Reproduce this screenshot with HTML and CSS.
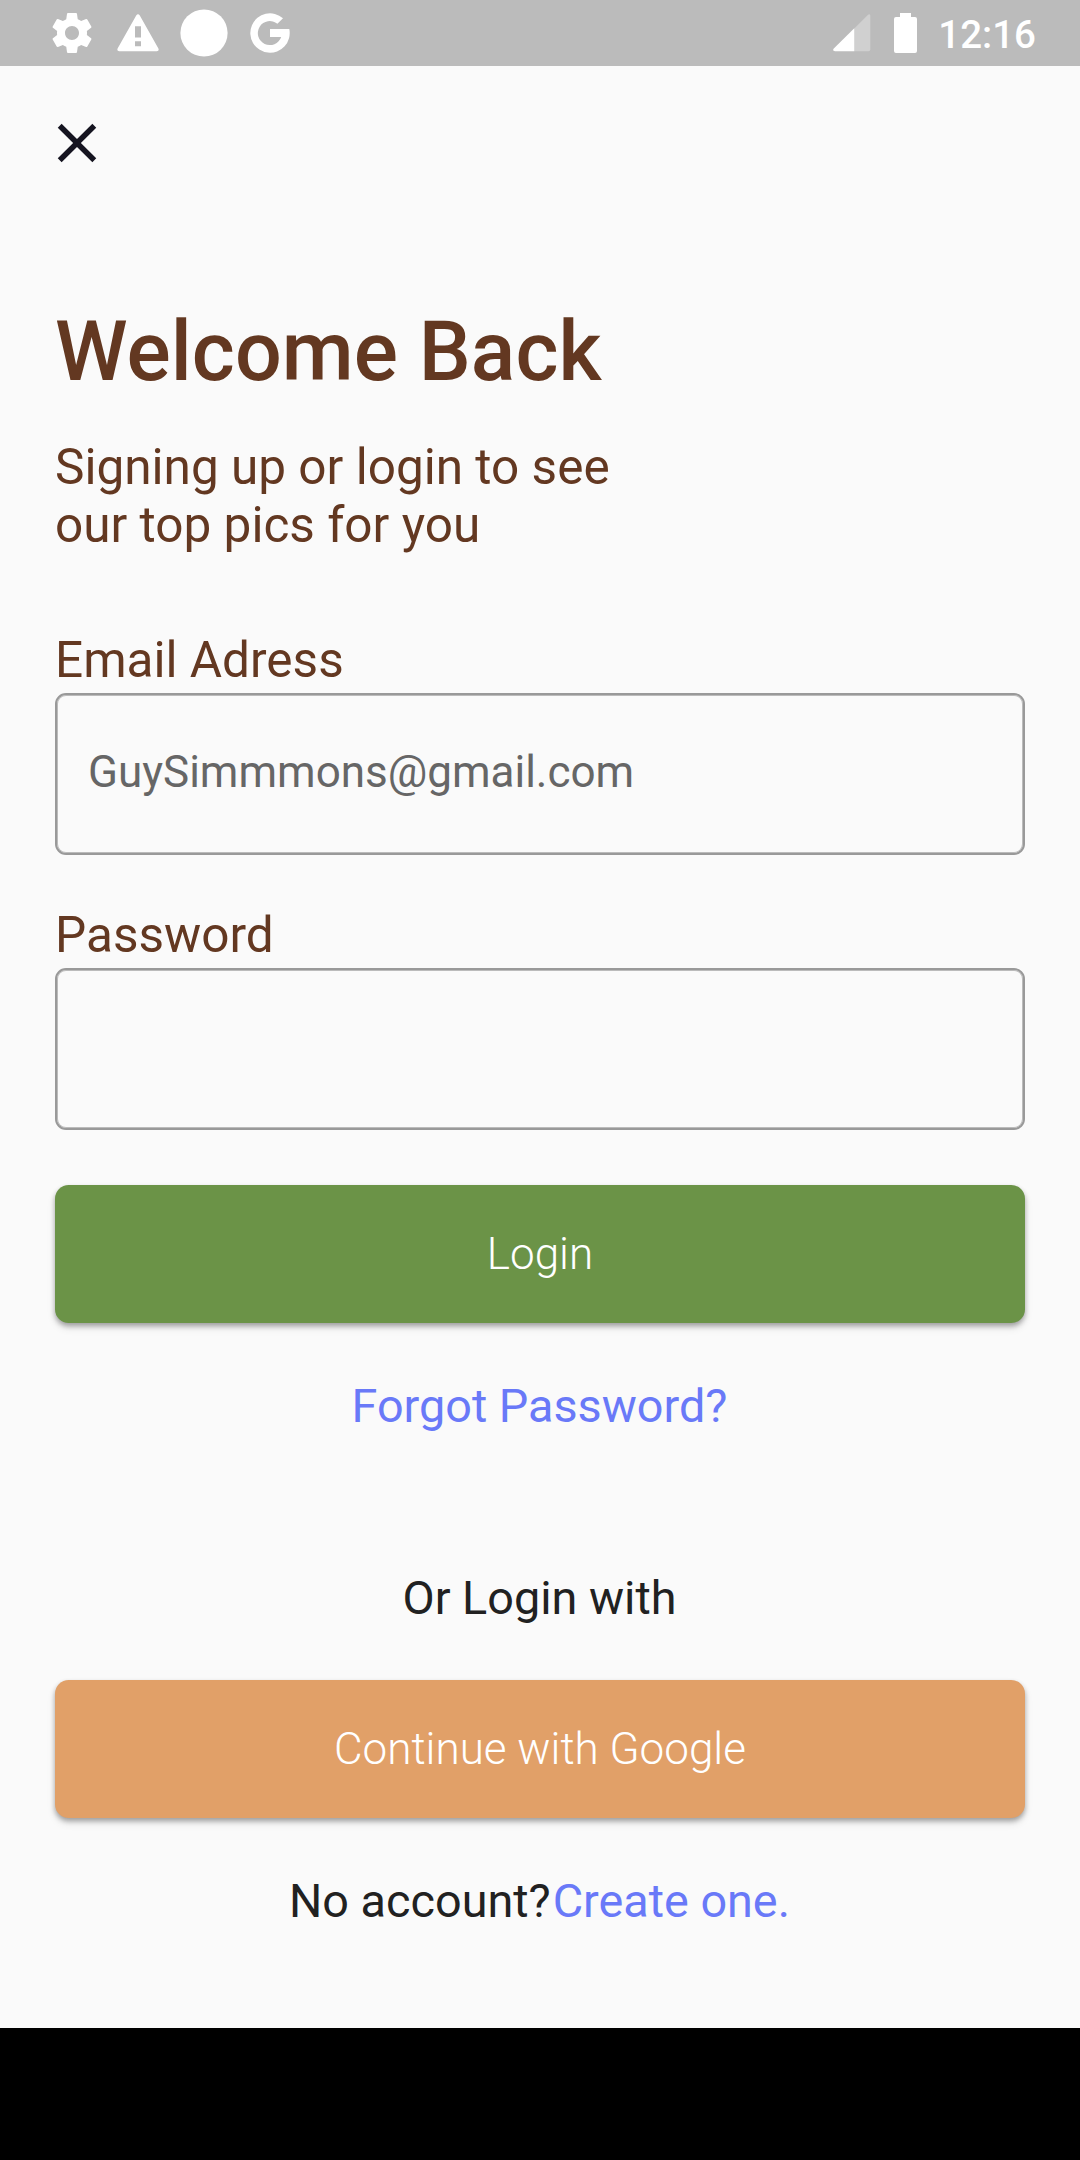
FILE: index.html
```html
<!DOCTYPE html>
<html lang="en">
<head>
<meta charset="utf-8">
<title>Login</title>
<link rel="stylesheet" href="styles.css">
</head>
<body>
<div class="screen">
  <header class="status">
    <div class="status-left">
      <svg class="gear" viewBox="0 0 24 24"><path d="M19.43 12.98c.04-.32.07-.64.07-.98s-.03-.66-.07-.98l2.11-1.65c.19-.15.24-.42.12-.64l-2-3.46c-.12-.22-.39-.3-.61-.22l-2.49 1c-.52-.4-1.08-.73-1.69-.98l-.38-2.65C14.46 2.18 14.25 2 14 2h-4c-.25 0-.46.18-.49.42l-.38 2.65c-.61.25-1.17.59-1.69.98l-2.49-1c-.23-.09-.49 0-.61.22l-2 3.46c-.13.22-.07.49.12.64l2.11 1.65c-.04.32-.07.65-.07.98s.03.66.07.98l-2.11 1.65c-.19.15-.24.42-.12.64l2 3.46c.12.22.39.3.61.22l2.49-1c.52.4 1.08.73 1.69.98l.38 2.65c.03.24.24.42.49.42h4c.25 0 .46-.18.49-.42l.38-2.65c.61-.25 1.17-.59 1.69-.98l2.49 1c.23.09.49 0 .61-.22l2-3.46c.12-.22.07-.49-.12-.64l-2.11-1.65zM12 15.5c-1.93 0-3.5-1.57-3.5-3.5s1.57-3.5 3.5-3.5 3.5 1.57 3.5 3.5-1.57 3.5-3.5 3.5z"/></svg>
      <svg class="warning" viewBox="0 0 42 38"><path fill-rule="evenodd" d="M19.2 1.5Q21 -1 22.8 1.5L41.4 34.6Q42.4 37.2 39.8 37.3H2.2Q-.4 37.2 .6 34.6ZM18 12.3V23.5H24V12.3ZM18 27.3V32.3H24V27.3Z"/></svg>
      <svg class="dot" viewBox="0 0 48 48"><circle cx="24" cy="24" r="23.6"/></svg>
      <svg class="google" viewBox="0 0 40 40"><path d="M33 5.2A19.7 19.7 0 1 0 39.3 16H20V24H31.2A12 12 0 1 1 27.4 10.8Z"/></svg>
    </div>
    <div class="status-right">
      <svg class="signal" viewBox="0 0 38 38"><path class="faint" d="M21.3 14.6L34.3 1.4Q37.3 -1 37.3 2V35.3Q37.3 37.3 35.3 37.3H21.3Z"/><path d="M21.3 14.2V37.3H2Q-1 37 .8 34.6Z"/></svg>
      <svg class="battery" viewBox="0 0 23 40"><path d="M6 0H17V4H21Q23 4 23 6V38Q23 40 21 40H2Q0 40 0 38V6Q0 4 2 4H6Z"/></svg>
      <span class="clock">12:16</span>
    </div>
  </header>

  <main class="content">
    <svg class="close" viewBox="0 0 24 24"><path d="M19 6.41L17.59 5 12 10.59 6.41 5 5 6.41 10.59 12 5 17.59 6.41 19 12 13.41 17.59 19 19 17.59 13.41 12z"/></svg>
    <h1 class="title">Welcome Back</h1>
    <p class="subtitle">Signing up or login to see<br>our top pics for you</p>

    <label class="label" for="email">Email Adress</label>
    <input class="field" id="email" type="email" placeholder="GuySimmmons@gmail.com">
    <label class="label second" for="password">Password</label>
    <input class="field" id="password" type="password">

    <button class="button login">Login</button>
    <a class="text link forgot">Forgot Password?</a>
    <p class="text or">Or Login with</p>
    <button class="button continue">Continue with Google</button>
    <p class="text signup">No account?<a class="link create">Create one.</a></p>
  </main>
  <footer class="navbar"></footer>
</div>
</body>
</html>
```
FILE: styles.css
```css
* { box-sizing: border-box; }
body { margin: 0; font-family: Roboto, "Liberation Sans", sans-serif; }
svg { display: block; flex: none; fill: #fff; }

.screen {
  width: 1080px;
  height: 2160px;
  display: flex;
  flex-direction: column;
  background: #fafafa;
}

.status {
  height: 66px;
  flex: none;
  display: flex;
  justify-content: space-between;
  padding: 0 44px 0 48px;
  background: #bbb;
}
.status-left, .status-right { display: flex; align-items: center; }
.gear { width: 48px; height: 48px; }
.warning { width: 42px; height: 38px; margin-left: 21px; }
.dot { width: 48px; height: 48px; margin-left: 21px; }
.google { width: 40px; height: 40px; margin-left: 22px; }
.signal { width: 38px; height: 38px; }
.faint { fill: #d0d0d0; }
.battery { width: 23px; height: 40px; margin-left: 23px; }
.clock {
  margin-left: 21px;
  padding-top: 3px;
  color: #fff;
  font-size: 38.5px;
  line-height: 46px;
  font-weight: 500;
}

.content {
  flex: 1;
  display: flex;
  flex-direction: column;
  padding: 44px 55px 0;
}
.close { width: 66px; height: 66px; margin-left: -11px; fill: #151420; }
.title, .subtitle, .text { margin: 0; }
.title {
  margin-top: 127px;
  color: #633821;
  font-size: 82.5px;
  line-height: 97px;
  font-weight: 500;
  letter-spacing: 0.08px;
}
.subtitle {
  margin-top: 38px;
  color: #633821;
  font-size: 49.5px;
  line-height: 58px;
}
.label {
  margin-top: 77px;
  color: #633821;
  font-size: 49.5px;
  line-height: 58px;
}
.second { margin-top: 51px; }
.field {
  height: 162px;
  margin: 4px 0 0;
  padding: 0 31px 4px;
  border: 2px solid #999;
  border-radius: 11px;
  box-shadow: inset 0 0 0 1px #bbb;
  background: transparent;
  font: 44px Roboto, "Liberation Sans", sans-serif;
}
.field::placeholder { color: #666; opacity: 1; }
.button {
  height: 138px;
  padding: 0;
  border: 0;
  border-radius: 13.75px;
  box-shadow: 0 3px 5px rgba(0, 0, 0, .3), 0 5px 8px rgba(0, 0, 0, .1);
  color: #fff;
  font: 300 44px Roboto, "Liberation Sans", sans-serif;
}
.login { margin-top: 55px; background: #6b9347; }
.continue { margin-top: 54px; background: #e1a068; }
.text {
  padding-right: 1px;
  color: #212121;
  font-size: 46.75px;
  line-height: 55px;
  text-align: center;
}
.forgot { margin-top: 56px; }
.or { margin-top: 137px; }
.signup { margin-top: 56px; }
.link { color: #6979f8; }
.create { margin-left: 2px; }

.navbar { height: 132px; flex: none; background: #000; }
```
